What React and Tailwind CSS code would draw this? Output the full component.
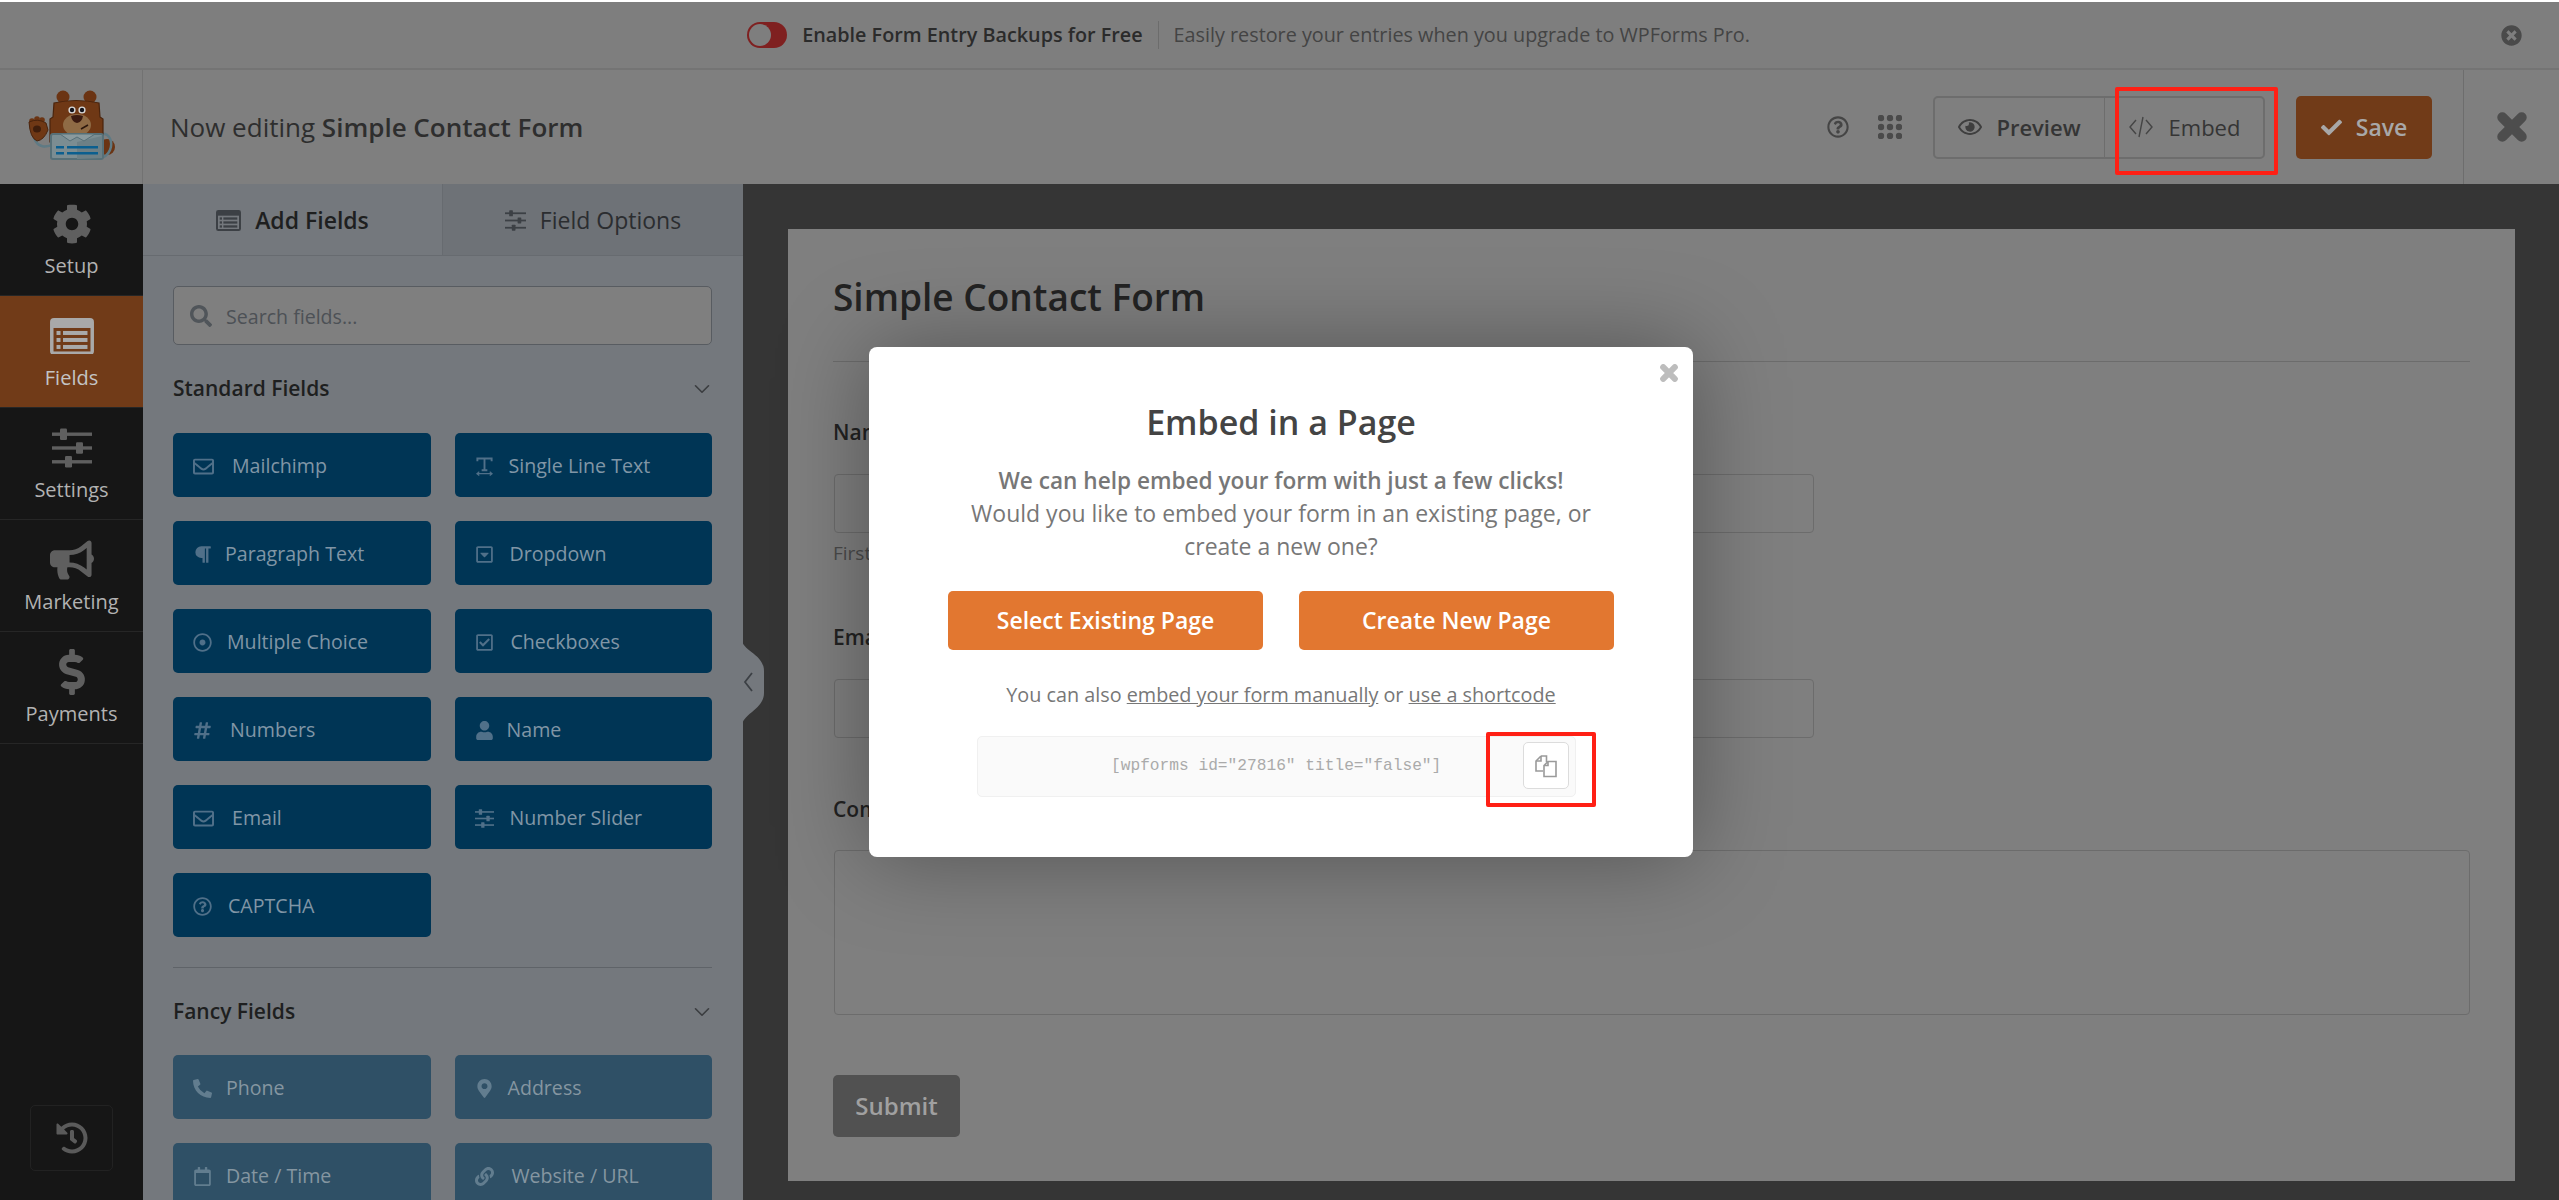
import React from 'react';
import {
  FaCog, FaBullhorn, FaDollarSign, FaRegEnvelope, FaParagraph, FaRegCaretSquareDown,
  FaRegDotCircle, FaRegCheckSquare, FaHashtag, FaUser, FaRegQuestionCircle, FaPhoneAlt, FaMapMarkerAlt,
  FaRegCalendar, FaLink, FaRegEye, FaTimesCircle, FaCheck, FaSearch, FaHistory,
} from 'react-icons/fa';
import { ChevronDown } from 'lucide-react';

// FA4 style list-alt, the package only has the heavier FA5 one
function ListIcon({ size, className, cut = '#713b18' }) {
  return (
    <svg width={size} height={size * 0.84} viewBox="0 0 44 37" className={className}>
      <rect width="44" height="37" rx="4" fill="currentColor" />
      <rect x="3.5" y="10" width="37" height="23.5" fill={cut} />
      <g fill="currentColor">
        <rect x="6.5" y="13" width="4" height="4" />
        <rect x="6.5" y="20" width="4" height="4" />
        <rect x="6.5" y="27" width="4" height="4" />
        <rect x="13" y="13" width="24.5" height="4" />
        <rect x="13" y="20" width="24.5" height="4" />
        <rect x="13" y="27" width="24.5" height="4" />
      </g>
    </svg>
  );
}

function SlidersIcon({ size, className }) {
  return (
    <svg width={size} height={size} viewBox="0 0 40 40" fill="currentColor" className={className}>
      <rect y="4.5" width="40" height="3.4" />
      <rect y="18.3" width="40" height="3.4" />
      <rect y="32.1" width="40" height="3.4" />
      <rect x="8" y="0.5" width="7" height="11.5" rx="1.2" />
      <rect x="24" y="14.2" width="7" height="11.5" rx="1.2" />
      <rect x="13" y="28" width="7" height="11.5" rx="1.2" />
    </svg>
  );
}

function TextWidthIcon({ size, className }) {
  return (
    <svg width={size} height={size} viewBox="0 0 20 20" fill="none" stroke="currentColor" className={className}>
      <path d="M2.5 4.5 V1.5 H17.5 V4.5 M10 1.5 V14 M7 14 H13" strokeWidth="2" />
      <path d="M2 17.5 H18 M4.5 15.5 L2 17.5 L4.5 19.5 M15.5 15.5 L18 17.5 L15.5 19.5" strokeWidth="1.2" />
    </svg>
  );
}

function CrossIcon({ size, className }) {
  return (
    <svg width={size} height={size} viewBox="0 0 28 28" fill="none" stroke="currentColor" strokeWidth="9.5" strokeLinecap="round" className={className}>
      <path d="M5 5 L23 23 M23 5 L5 23" />
    </svg>
  );
}

const navItems = [
  { label: 'Setup', icon: FaCog, size: 40 },
  { label: 'Fields', icon: ListIcon, size: 44, active: true },
  { label: 'Settings', icon: SlidersIcon, size: 40 },
  { label: 'Marketing', icon: FaBullhorn, size: 44 },
  { label: 'Payments', icon: FaDollarSign, size: 46 },
];

const standardFields = [
  { label: 'Mailchimp', icon: FaRegEnvelope, gap: 'gap-[18px]' },
  { label: 'Single Line Text', icon: TextWidthIcon, gap: 'gap-[15px]' },
  { label: 'Paragraph Text', icon: FaParagraph, gap: 'gap-[13px]' },
  { label: 'Dropdown', icon: FaRegCaretSquareDown, gap: 'gap-[16px]' },
  { label: 'Multiple Choice', icon: FaRegDotCircle, gap: 'gap-[15px]' },
  { label: 'Checkboxes', icon: FaRegCheckSquare, gap: 'gap-[17px]' },
  { label: 'Numbers', icon: FaHashtag, gap: 'gap-[18px]' },
  { label: 'Name', icon: FaUser, gap: 'gap-[13px]' },
  { label: 'Email', icon: FaRegEnvelope, gap: 'gap-[18px]' },
  { label: 'Number Slider', icon: SlidersIcon, gap: 'gap-[16px]' },
  { label: 'CAPTCHA', icon: FaRegQuestionCircle, gap: 'gap-[16px]' },
];

const fancyFields = [
  { label: 'Phone', icon: FaPhoneAlt, gap: 'gap-[14px]' },
  { label: 'Address', icon: FaMapMarkerAlt, gap: 'gap-[14px]' },
  { label: 'Date / Time', icon: FaRegCalendar, gap: 'gap-[14px]' },
  { label: 'Website / URL', icon: FaLink, gap: 'gap-[18px]' },
];

function BearLogo() {
  return (
    <svg width="143" height="114" viewBox="0 0 143 114">
      <circle cx="107" cy="77" r="8" fill="#6b3413" />
      <path d="M34 68 C38 78 46 78 54 74 M100 64 C110 62 113 72 110 80 C108 85 104 87 102 87" fill="none" stroke="#5f7a84" strokeWidth="2.5" />
      <circle cx="63" cy="27" r="6.5" fill="#6b3413" />
      <circle cx="90" cy="27" r="6.5" fill="#6b3413" />
      <path d="M54 33 Q76 28 99 33 L100 47 L103 49 L103 72 L50 72 L50 49 L53 47 Z" fill="#6f3815" stroke="#4a240d" strokeWidth="1.2" />
      <ellipse cx="77" cy="55" rx="14" ry="11" fill="#8f6b45" />
      <circle cx="72" cy="40" r="3.6" fill="#d8d8d8" />
      <circle cx="82" cy="40" r="3.6" fill="#d8d8d8" />
      <circle cx="72" cy="40" r="2.2" fill="#14141c" />
      <circle cx="82" cy="40" r="2.2" fill="#14141c" />
      <path d="M71 46 Q77 44 83 46 Q82 52 77 53 Q72 52 71 46 Z" fill="#3b1a10" />
      <path d="M81 59 L88 55" stroke="#2c170c" strokeWidth="1.5" />
      <rect x="51" y="64" width="52" height="25" rx="2" fill="#7b8d92" stroke="#577078" strokeWidth="2" />
      <path d="M77 89 L77 72 L102 66 L102 88 Z" fill="#6d8086" />
      <path d="M60 64 L70 71 L77 67 L84 71 L95 64 Z" fill="#8a9a9e" stroke="#577078" strokeWidth="1" />
      <rect x="56" y="76" width="8" height="2.5" fill="#0b5f8f" />
      <rect x="67" y="76" width="31" height="2.5" fill="#0b5f8f" />
      <rect x="56" y="82" width="8" height="2.5" fill="#0b5f8f" />
      <rect x="67" y="82" width="31" height="2.5" fill="#0b5f8f" />
      <circle cx="32" cy="51" r="2.8" fill="#6b3413" />
      <circle cx="37" cy="49" r="2.8" fill="#6b3413" />
      <circle cx="42" cy="50" r="2.8" fill="#6b3413" />
      <path d="M29 52 Q38 48 46 53 L48 60 Q44 70 37 71 Q30 68 29 52 Z" fill="#6f3815" stroke="#4a240d" strokeWidth="1" />
      <ellipse cx="37" cy="59" rx="4" ry="3.5" fill="#3f1e0c" />
    </svg>
  );
}

function FieldButton({ field, fancy }) {
  const Icon = field.icon;
  return (
    <div className={`h-[64px] pt-[2px] rounded-[5px] flex items-center pl-[20px] text-[19.6px] ${field.gap} ${fancy ? 'bg-[#2f5066] text-[#8596a1]' : 'bg-[#003555] text-[#8096a6]'}`}>
      <Icon size={field.label === 'Mailchimp' || field.label === 'Email' ? 21 : 19} className={`shrink-0 ${fancy ? 'text-[#627d8f]' : 'text-[#507089]'}`} />
      <span>{field.label}</span>
    </div>
  );
}

function SectionHead({ title, className }) {
  return (
    <div className={`flex items-center justify-between h-[32px] ${className}`}>
      <span className="text-[21px] font-semibold text-[#1e1f20]">{title}</span>
      <ChevronDown size={26} strokeWidth={1.5} className="text-[#3b3d40] -mr-[3px]" />
    </div>
  );
}

function FormLabel({ children, className }) {
  return <div className={`text-[21px] font-semibold text-[#222] ${className}`}>{children}</div>;
}

function CopyIcon() {
  return (
    <svg width="24" height="24" viewBox="0 0 24 24" fill="none" stroke="#9a9a9a" strokeWidth="1.6">
      <path d="M7 2 h5.5 v6 M7 2 L2 7 v10 h7" />
      <path d="M7 2 v5 h-5" />
      <path d="M14 7.5 h8 v15 h-12 v-11 Z M14 7.5 v4 h-4" />
    </svg>
  );
}

export default function App() {
  return (
    <div className="relative w-[2559px] h-[1200px] overflow-hidden bg-[#353535] pt-[2px] text-[#222] shadow-[inset_0_2px_0_#ffffff] font-['Open_Sans','Noto_Sans',sans-serif]">
      {/* notice bar */}
      <div className="relative h-[68px] bg-[#7e7e7e] border-b-2 border-[#747474] flex items-center justify-center gap-[15px] text-[19.8px] text-[#2b2b2b] pr-[62px]">
        <span className="w-[40px] h-[26px] rounded-full bg-[#7f2020] relative block">
          <span className="absolute left-[2px] top-[2px] w-[22px] h-[22px] rounded-full bg-[#7e7e7e]" />
        </span>
        <span className="font-semibold">Enable Form Entry Backups for Free</span>
        <span className="w-px h-[28px] bg-[#6c6c6c]" />
        <span className="text-[#444]">Easily restore your entries when you upgrade to WPForms Pro.</span>
        <FaTimesCircle size={21} className="absolute left-[2501px] top-[23px] text-[#4a4a4a]" />
      </div>

      {/* header */}
      <div className="h-[114px] bg-[#7f7f7f] flex items-stretch">
        <div className="w-[143px] border-r border-[#727272] shrink-0">
          <BearLogo />
        </div>
        <div className="flex-1 flex items-center pl-[27px] text-[26px] text-[#2e2e2e]">
          Now editing&nbsp;<span className="font-semibold">Simple Contact Form</span>
        </div>
        <div className="flex items-center">
          <FaRegQuestionCircle size={22} className="text-[#454545]" />
          <svg width="24" height="24" viewBox="0 0 24 24" className="ml-[29px] mr-[2px] text-[#4a4a4a]" fill="currentColor">
            {[3, 12, 21].flatMap((y) => [3, 12, 21].map((x) => <circle key={`${x}-${y}`} cx={x} cy={y} r="3.2" />))}
          </svg>
          <div className="ml-[29px] w-[332px] h-[63px] border-2 border-[#6d6d6d] rounded-[5px] flex text-[22px] text-[#353535]">
            <div className="w-[170px] border-r border-[#6d6d6d] flex items-center justify-center gap-[14px] font-semibold">
              <FaRegEye size={24} className="text-[#3f3f3f]" />
              Preview
            </div>
            <div className="flex-1 flex items-center justify-center gap-[15px] font-medium">
              <svg width="26" height="26" viewBox="0 0 26 26" fill="none" stroke="#454545" strokeWidth="1.4">
                <path d="M8 6 L2 13 L8 20 M18 6 L24 13 L18 20 M15 3 L11 23" />
              </svg>
              Embed
            </div>
          </div>
          <div className="ml-[31px] w-[136px] h-[63px] rounded-[5px] bg-[#713b18] flex items-center justify-center gap-[14px] text-[23px] font-semibold text-[#a8a8a8]">
            <FaCheck size={21} />
            Save
          </div>
        </div>
        <div className="ml-[31px] w-[96px] border-l border-[#6d6d6d] flex items-center justify-center">
          <CrossIcon size={30} className="text-[#4d4d4d]" />
        </div>
      </div>

      {/* builder */}
      <div className="flex h-[1016px]">
        <div className="relative w-[143px] shrink-0 bg-[#161616]">
          {navItems.map((item) => {
            const Icon = item.icon;
            return (
              <div key={item.label} className={`h-[112px] pt-[2px] flex flex-col items-center justify-center gap-[7px] border-b border-[#262626] text-[20px] ${item.active ? 'bg-[#713b18] text-[#c4c4c4]' : 'text-[#b2b2b2]'}`}>
                <div className="h-[44px] flex items-center">
                  <Icon size={item.size} className={item.active ? 'text-[#a9a9a9]' : 'text-[#5f5f5f]'} />
                </div>
                <span className="leading-[26px]">{item.label}</span>
              </div>
            );
          })}
          <div className="absolute left-[30px] top-[921px] w-[83px] h-[66px] rounded-[5px] border border-[#222] flex items-center justify-center">
            <FaHistory size={32} className="text-[#5a5a5a]" />
          </div>
        </div>

        <div className="relative w-[600px] shrink-0 bg-[#74787d]">
          <div className="flex h-[72px] border-b border-[#676b70] text-[23px]">
            <div className="w-[300px] pt-[2px] border-r border-[#676b70] flex items-center justify-center gap-[14px] font-semibold text-[#1e1f20]">
              <ListIcon size={25} cut="#74787d" className="text-[#3c4045]" />
              Add Fields
            </div>
            <div className="flex-1 pt-[2px] bg-[#6e7277] flex items-center justify-center gap-[14px] text-[#2b2d30]">
              <SlidersIcon size={21} className="text-[#3c4045]" />
              Field Options
            </div>
          </div>
          <div className="pl-[30px] pr-[31px] pt-[30px]">
            <div className="h-[59px] rounded-[5px] bg-[#7f7f7f] border border-[#585c61] flex items-center pl-[16px] gap-[14px] text-[19.6px] text-[#4d5156]">
              <FaSearch size={22} className="text-[#50555a]" />
              <span className="pt-[2px]">Search fields...</span>
            </div>
            <SectionHead title="Standard Fields" className="mt-[28px]" />
            <div className="mt-[28px] grid grid-cols-2 gap-x-[24px] gap-y-[24px]">
              {standardFields.map((f) => <FieldButton key={f.label} field={f} />)}
            </div>
            <div className="mt-[30px] border-t border-[#5f6368]" />
            <SectionHead title="Fancy Fields" className="mt-[28px]" />
            <div className="mt-[27px] grid grid-cols-2 gap-x-[24px] gap-y-[24px]">
              {fancyFields.map((f) => <FieldButton key={f.label} field={f} fancy />)}
            </div>
          </div>
          <svg width="24" height="84" viewBox="0 0 24 84" className="absolute left-[599px] top-[457px]">
            <path d="M0 0 C2 10 22 14 22 30 L22 52 C22 68 2 72 0 84 Z" fill="#74787d" />
            <path d="M10 32 L3 41 L10 50" fill="none" stroke="#3c4045" strokeWidth="1.8" />
          </svg>
        </div>

        <div className="flex-1 pl-[45px] pr-[44px] pt-[45px]">
          <div className="h-[952px] bg-[#7f7f7f] px-[45px] pt-[40px]">
            <div className="text-[37px] font-semibold leading-[56px] text-[#232323] text-nowrap">Simple Contact Form</div>
            <div className="mt-[36px] border-t border-[#6c6c6c]" />
            <FormLabel className="mt-[55px] leading-[30px]">Name</FormLabel>
            <div className="mt-[27px] w-[980px] h-[59px] ml-[1px] border border-[#6c6c6c] rounded-[4px]" />
            <div className="mt-[7px] text-[19px] leading-[26px] text-[#4a4a4a]">First</div>
            <FormLabel className="mt-[56px] leading-[30px]">Email</FormLabel>
            <div className="mt-[27px] w-[980px] h-[59px] ml-[1px] border border-[#6c6c6c] rounded-[4px]" />
            <FormLabel className="mt-[56px] leading-[30px]">Comment</FormLabel>
            <div className="mt-[26px] h-[165px] ml-[1px] border border-[#6c6c6c] rounded-[4px]" />
            <div className="mt-[60px] w-[127px] h-[62px] rounded-[5px] bg-[#515151] flex items-center justify-center text-[24px] font-semibold text-[#a0a0a0]">Submit</div>
          </div>
        </div>
      </div>

      {/* modal */}
      <div className="absolute left-[869px] top-[347px] w-[824px] h-[510px] rounded-[8px] bg-white shadow-[0_0_90px_rgba(0,0,0,0.35)] text-center">
        <CrossIcon size={18} className="absolute right-[15px] top-[17px] text-[#bdbdbd]" />
        <div className="mt-[50px] text-[34px] leading-[50px] font-semibold text-[#444]">Embed in a Page</div>
        <div className="mt-[17px] text-[23px] leading-[33px] text-[#777]">
          <div className="font-semibold text-[22.6px]">We can help embed your form with just a few clicks!</div>
          <div className="w-[660px] mx-auto">Would you like to embed your form in an existing page, or create a new one?</div>
        </div>
        <div className="mt-[28px] flex justify-center gap-[36px]">
          <div className="w-[315px] h-[59px] rounded-[5px] bg-[#e27730] flex items-center justify-center text-[23px] font-semibold text-white">Select Existing Page</div>
          <div className="w-[315px] h-[59px] rounded-[5px] bg-[#e27730] flex items-center justify-center text-[23px] font-semibold text-white">Create New Page</div>
        </div>
        <div className="mt-[31px] text-[19.8px] leading-[28px] text-[#777]">
          You can also <span className="underline">embed your form manually</span> or <span className="underline">use a shortcode</span>
        </div>
        <div className="mt-[27px] ml-[108px] w-[599px] h-[61px] rounded-[5px] bg-[#fafafa] border border-[#f0f0f0] flex items-center font-['Liberation_Mono',monospace] text-[16.2px] text-[#aaa]">
          <span className="ml-[133px]">[wpforms id="27816" title="false"]</span>
          <div className="absolute left-[654px] top-[395px] w-[46px] h-[47px] rounded-[5px] bg-white border border-[#dcdcdc] flex items-center justify-center">
            <CopyIcon />
          </div>
        </div>
      </div>

      {/* highlight boxes */}
      <div className="absolute left-[2115px] top-[87px] w-[163px] h-[88px] border-[4px] border-[#ff2015] rounded-[2px]" />
      <div className="absolute left-[1486px] top-[732px] w-[110px] h-[75px] border-[4px] border-[#ff2015] rounded-[2px]" />
    </div>
  );
}
